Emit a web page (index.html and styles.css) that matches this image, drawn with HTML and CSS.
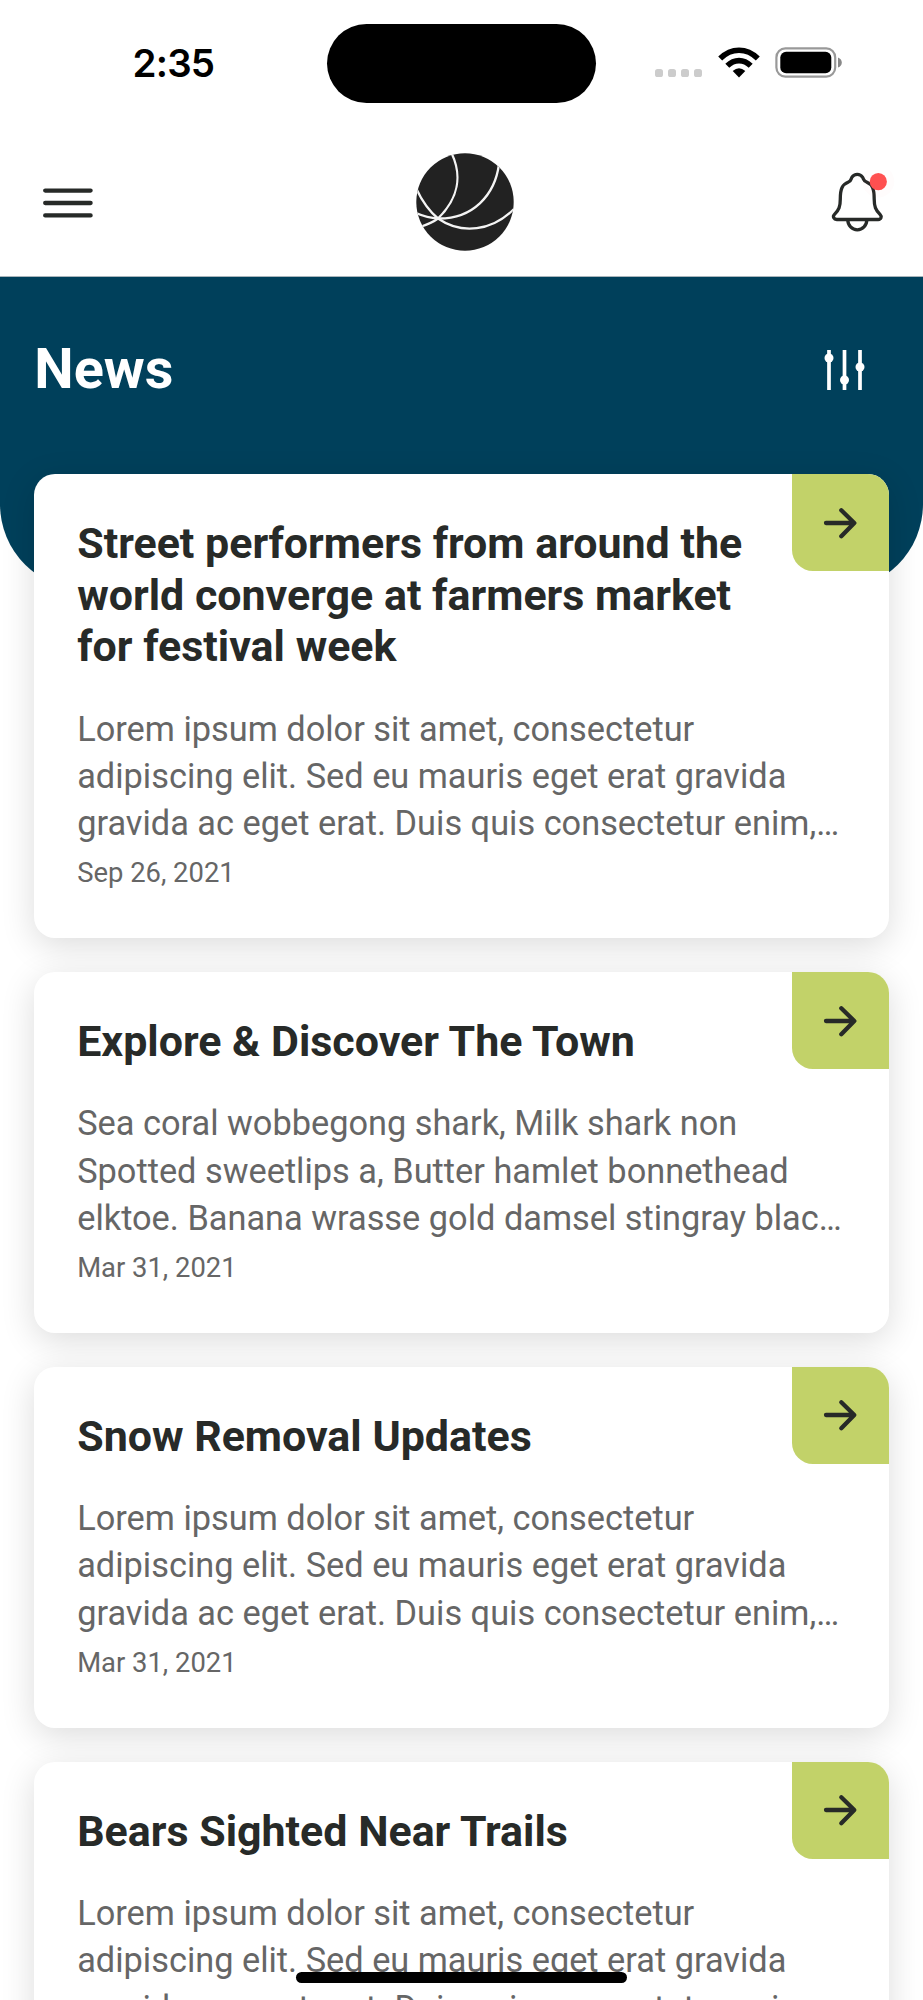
FILE: index.html
```
<!DOCTYPE html>
<html lang="en">
<head>
<meta charset="utf-8">
<title>News</title>
<link rel="stylesheet" href="styles.css">
</head>
<body>
<svg width="0" height="0" class="defs">
  <symbol id="arrow" viewBox="0 0 36 36"><path d="M4 18h28M19.3 5.2L32.3 18L19.3 31.2" fill="none" stroke="#272a28" stroke-width="4.3" stroke-linecap="round" stroke-linejoin="round"/></symbol>
</svg>
<div class="screen">
  <div class="status">
    <div class="clock">2:35</div>
    <div class="island"></div>
    <div class="indicators">
      <svg class="signal" width="48" height="8" viewBox="0 0 48 8" fill="#ccc"><rect width="8" height="8" rx="2.6"/><rect x="13" width="8" height="8" rx="2.6"/><rect x="26" width="8" height="8" rx="2.6"/><rect x="39" width="8" height="8" rx="2.6"/></svg>
      <svg class="wifi" width="42" height="31" viewBox="0 0 42 31"><g fill="none" stroke="#000" stroke-width="5.6"><path d="M2.2 11.6Q10.5 3.3 21 3.3T39.8 11.6"/><path d="M9.3 18.8Q14.5 13.6 21 13.6T32.7 18.8"/></g><path d="M14.7 24Q21 18.4 27.3 24L21 30.5Z"/></svg>
      <svg class="battery" width="68" height="31" viewBox="0 0 68 31"><rect x="1.4" y="1.4" width="58.8" height="28.2" rx="9" fill="none" stroke="#999" stroke-width="2.2"/><rect x="5.3" y="4.8" width="51" height="21.4" rx="5.8"/><path d="M63 10.5Q66.8 12 66.8 15.5T63 20.5Z" fill="#888"/></svg>
    </div>
  </div>
  <header class="bar">
    <svg class="menu" width="50" height="30" viewBox="0 0 50 30"><path d="M2.2 2.6h45.4M2.2 15h45.4M2.2 27.4h45.4" stroke="#272a28" stroke-width="4.3" stroke-linecap="round"/></svg>
    <svg class="logo" width="98" height="98" viewBox="0 0 98 98"><clipPath id="disc"><circle cx="49" cy="49" r="48.7"/></clipPath><circle cx="49" cy="49" r="48.7" fill="#222"/><g clip-path="url(#disc)" fill="none" stroke="#f4f4f4" stroke-width="2.3"><path d="M35.500 0C46 22 43 45 22 65.500C16 70 10 72 4 74"/><path d="M83 11C79 42 57 66 22 65.500C14 65 7 63 0 60"/><path d="M0 35C5 46 12 57 22 65.500C46 82 76 78 98 56"/></g></svg>
    <svg class="bell" width="66" height="64" viewBox="0 0 66 64"><g fill="none" stroke="#272a28" stroke-width="3.3" stroke-linejoin="round"><path d="M7.800 49.500H49.200C52.200 49.500 53 46.500 51.200 44.700C46.500 40 45.200 36.500 45.200 29C45.200 19 43.500 14.500 37.500 12C34.500 11 35 9.500 33.500 7.200C31 3.500 25.500 3.500 23 7.200C21.500 9.500 22.500 11 19.500 12C13 14.500 11.300 19 11.300 29C11.300 36.500 10 40 5.300 44.700C3.500 46.500 4.800 49.500 7.800 49.500Z"/><path d="M18.800 50A9.500 9.800 0 0 0 37.800 50"/></g><circle cx="49.300" cy="11.500" r="16" fill="#ff5050" opacity=".015"/><circle cx="49.300" cy="11.700" r="8.600" fill="#ff5050"/></svg>
  </header>
  <section class="hero">
    <h1>News</h1>
    <svg class="filter" width="42" height="42" viewBox="0 0 42 42"><path d="M5 1v40M20.500 1v40M36 1v40" stroke="#fff" stroke-width="3.700"/><g fill="#fff"><circle cx="5" cy="9" r="4.500"/><circle cx="20.500" cy="31" r="4.500"/><circle cx="36" cy="18" r="4.500"/></g></svg>
  </section>
  <main class="list">
    <article class="card"><span class="go"><svg width="36" height="36"><use href="#arrow"/></svg></span>
      <h2>Street performers from around the<br>world converge at farmers market<br>for festival week</h2>
      <p>Lorem ipsum dolor sit amet, consectetur<br>adipiscing elit. Sed eu mauris eget erat gravida<br>gravida ac eget erat. Duis quis consectetur enim,…</p>
      <time>Sep 26, 2021</time></article>
    <article class="card"><span class="go"><svg width="36" height="36"><use href="#arrow"/></svg></span>
      <h2>Explore &amp; Discover The Town</h2>
      <p>Sea coral wobbegong shark, Milk shark non<br>Spotted sweetlips a, Butter hamlet bonnethead<br>elktoe. Banana wrasse gold damsel stingray blac…</p>
      <time>Mar 31, 2021</time></article>
    <article class="card"><span class="go"><svg width="36" height="36"><use href="#arrow"/></svg></span>
      <h2>Snow Removal Updates</h2>
      <p>Lorem ipsum dolor sit amet, consectetur<br>adipiscing elit. Sed eu mauris eget erat gravida<br>gravida ac eget erat. Duis quis consectetur enim,…</p>
      <time>Mar 31, 2021</time></article>
    <article class="card"><span class="go"><svg width="36" height="36"><use href="#arrow"/></svg></span>
      <h2>Bears Sighted Near Trails</h2>
      <p>Lorem ipsum dolor sit amet, consectetur<br>adipiscing elit. Sed eu mauris eget erat gravida<br>gravida ac eget erat. Duis quis consectetur enim,…</p>
      <time>Mar 31, 2021</time></article>
  </main>
  <div class="home"></div>
</div>
</body>
</html>
```
FILE: styles.css
```
* { box-sizing: border-box; margin: 0; }
body { font-family: Roboto, "Liberation Sans", sans-serif; background: #fff; color: #272a28; }
svg { display: block; flex: none; }
.defs { position: absolute; }
.screen { position: relative; width: 923px; height: 2000px; overflow: hidden; }

.status { display: grid; grid-template-columns: 327px 269px 1fr; height: 127px; padding-top: 24px; align-items: start; }
.clock { font: 600 38.5px/46px Inter, sans-serif; letter-spacing: -.8px; color: #000; padding: 16px 0 0 132.5px; }
.island { height: 79px; border-radius: 40px; background: #000; }
.indicators { display: flex; align-items: flex-end; height: 54px; padding-left: 59px; }
.wifi { margin-left: 15px; }
.battery { margin-left: 15px; }
.signal { margin-bottom: 1px; }

.bar { display: flex; align-items: center; justify-content: space-between; height: 150px; padding: 0 28px 0 43px; border-bottom: 1px solid #a9b5bb; }
.logo { margin-left: 7.4px; }
.menu { margin-top: 3px; }

.hero { display: flex; justify-content: space-between; align-items: flex-start; height: 313px; padding: 59px 57px 0 34.3px; background: #00405b; border-radius: 0 0 86px 86px; }
.hero h1 { font-size: 55.8px; line-height: 66px; font-weight: 700; color: #fff; }
.filter { margin-top: 13px; }

.list { display: flex; flex-direction: column; gap: 34.3px; margin-top: -115.6px; padding: 0 34.3px; }
.card { position: relative; flex: none; height: 360.6px; padding: 43.6px 42.9px 0; background: #fff; border-radius: 21px; box-shadow: 0 8px 34px rgba(0, 0, 0, .14); white-space: nowrap; }
.card:first-child { height: 463.6px; }
.go { position: absolute; top: 0; right: 0; width: 96.6px; height: 96.6px; display: flex; align-items: center; justify-content: center; background: #c2d269; border-radius: 0 21px 0 21px; }
.card h2 { font-size: 42.95px; line-height: 51.5px; font-weight: 700; }
.card p { margin-top: 33px; font-size: 34.34px; line-height: 47.2px; color: #666; }
.card time { display: block; font-size: 27.4px; line-height: 34px; margin-top: 9.3px; color: #666; }

.home { position: absolute; left: 296px; top: 1972px; width: 331px; height: 11px; border-radius: 6px; background: #000; }
```
